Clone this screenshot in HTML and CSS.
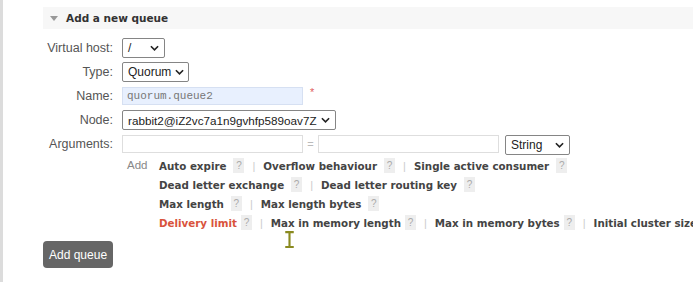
FILE: index.html
```html
<!DOCTYPE html>
<html lang="en">
<head>
  <meta charset="UTF-8">
  <title>Add a new queue</title>
  <link rel="stylesheet" href="styles.css">
</head>
<body>
  <div class="page">
    <div class="section">
      <div class="section-head">
        <span class="arrow"></span>
        <span class="section-title">Add a new queue</span>
      </div>

      <div class="form">
        <div class="row">
          <label class="lbl">Virtual host:</label>
          <div class="sel sel-vhost"><span>/</span>
            <svg class="chev" viewBox="0 0 10 6"><path d="M1 1 L5 5 L9 1" /></svg>
          </div>
        </div>
        <div class="row">
          <label class="lbl">Type:</label>
          <div class="sel sel-type"><span>Quorum</span>
            <svg class="chev" viewBox="0 0 10 6"><path d="M1 1 L5 5 L9 1" /></svg>
          </div>
        </div>
        <div class="row">
          <label class="lbl">Name:</label>
          <div class="inp inp-name">quorum.queue2</div>
          <span class="req">*</span>
        </div>
        <div class="row">
          <label class="lbl">Node:</label>
          <div class="sel sel-node"><span>rabbit2@iZ2vc7a1n9gvhfp589oav7Z</span>
            <svg class="chev" viewBox="0 0 10 6"><path d="M1 1 L5 5 L9 1" /></svg>
          </div>
        </div>
        <div class="row">
          <label class="lbl">Arguments:</label>
          <div class="inp inp-arg"></div>
          <span class="eq">=</span>
          <div class="inp inp-arg"></div>
          <div class="sel sel-string"><span>String</span>
            <svg class="chev" viewBox="0 0 10 6"><path d="M1 1 L5 5 L9 1" /></svg>
          </div>
        </div>

        <div class="add-block">
          <span class="add-word">Add</span>
          <div class="add-lines">
            <div class="line">
              <span class="arg">Auto expire</span><span class="help">?</span><span class="sep">|</span>
              <span class="arg">Overflow behaviour</span><span class="help">?</span><span class="sep">|</span>
              <span class="arg">Single active consumer</span><span class="help">?</span>
            </div>
            <div class="line">
              <span class="arg">Dead letter exchange</span><span class="help">?</span><span class="sep">|</span>
              <span class="arg">Dead letter routing key</span><span class="help">?</span>
            </div>
            <div class="line">
              <span class="arg">Max length</span><span class="help">?</span><span class="sep">|</span>
              <span class="arg">Max length bytes</span><span class="help">?</span>
            </div>
            <div class="line">
              <span class="arg arg-red">Delivery limit</span><span class="help tight">?</span><span class="sep">|</span>
              <span class="arg">Max in memory length</span><span class="help tight">?</span><span class="sep">|</span>
              <span class="arg">Max in memory bytes</span><span class="help tight">?</span><span class="sep">|</span>
              <span class="arg">Initial cluster size</span>
            </div>
          </div>
        </div>

        <button class="btn">Add queue</button>
      </div>
    </div>

    <!-- mouse pointer captured in the screenshot -->
    <svg class="cursor" viewBox="0 0 10 16">
      <path d="M1 1 H9 M5 1 V15 M1 15 H9" />
    </svg>
  </div>
</body>
</html>
```

FILE: styles.css
```css
* {
  box-sizing: border-box;
}
body {
  margin: 0;
  background: #fff;
  font-family: "Liberation Sans", Arial, sans-serif;
  color: #444;
  overflow: hidden;
}
.page {
  position: relative;
  height: 282px;
  border-left: 3px solid #dcdcdc;
  padding: 7px 0 0 40px;
}
.section-head {
  height: 22px;
  background: #f7f7f7;
  display: flex;
  align-items: center;
  padding-left: 7px;
}
.arrow {
  width: 0;
  height: 0;
  border-left: 4px solid transparent;
  border-right: 4px solid transparent;
  border-top: 5px solid #999;
  margin-right: 8px;
}
.section-title {
  font-family: "DejaVu Sans", Verdana, sans-serif;
  font-weight: bold;
  font-size: 10.5px;
  color: #333;
}
.form {
  padding-top: 9px;
}
.row {
  display: flex;
  align-items: center;
  height: 20px;
  margin-bottom: 4px;
}
.lbl {
  width: 70px;
  flex-shrink: 0;
  text-align: right;
  font-size: 12.5px;
  color: #555;
  margin-right: 9px;
}
.sel {
  height: 20px;
  border: 1px solid #858585;
  border-radius: 2px;
  display: flex;
  align-items: center;
  justify-content: space-between;
  gap: 4px;
  padding: 0 5px 0 5px;
  font-size: 12px;
  color: #222;
  background: #fff;
  white-space: nowrap;
}
.chev {
  flex-shrink: 0;
  width: 9px;
  height: 6px;
  fill: none;
  stroke: #222;
  stroke-width: 1.8;
}
.sel-vhost {
  width: 43px;
}
.sel-type {
  width: 67px;
}
.sel-node {
  width: 214px;
  font-size: 11.7px;
}
.sel-string {
  width: 65px;
  margin-left: 6px;
  margin-top: 2px;
}
.inp {
  height: 18px;
  width: 181px;
  flex-shrink: 0;
  border: 1px solid #dedede;
  background: #fff;
}
.inp-name {
  background: #e8f0fe;
  border-color: #d6e0f2;
  font-family: "Liberation Mono", "Courier New", monospace;
  font-size: 11px;
  color: #777;
  padding: 1px 4px;
  line-height: 15px;
}
.req {
  color: #e06060;
  font-size: 11px;
  margin-left: 7px;
  align-self: flex-start;
}
.eq {
  color: #bbb;
  font-size: 11px;
  width: 15px;
  text-align: center;
}
.add-block {
  display: flex;
  margin-left: 84px;
  margin-top: -2px;
}
.add-word {
  flex-shrink: 0;
  font-size: 11.5px;
  color: #888;
  width: 32px;
  line-height: 19px;
}
.add-lines {
  white-space: nowrap;
}
.line {
  height: 19px;
  display: flex;
  align-items: center;
}
.arg {
  font-family: "DejaVu Sans", Verdana, sans-serif;
  font-weight: bold;
  font-size: 10.3px;
  color: #444;
}
.arg-red {
  color: #d9533c;
}
.help {
  display: inline-block;
  width: 11px;
  height: 15px;
  line-height: 15px;
  background: #eee;
  color: #aaa;
  font-size: 10px;
  text-align: center;
  margin-left: 7px;
}
.help.tight {
  margin-left: 4px;
}
.sep {
  color: #ccc;
  font-size: 11px;
  margin: 0 8px 0 8px;
}
.btn {
  display: block;
  margin-top: 9px;
  height: 27px;
  padding: 0 6px;
  background: #666;
  color: #fff;
  border: none;
  border-radius: 4px;
  font-family: "Liberation Sans", Arial, sans-serif;
  font-size: 12px;
}
.cursor {
  position: absolute;
  left: 281px;
  top: 231px;
  width: 11px;
  height: 17px;
  fill: none;
  stroke: #8a8a20;
  stroke-width: 2;
}
```
